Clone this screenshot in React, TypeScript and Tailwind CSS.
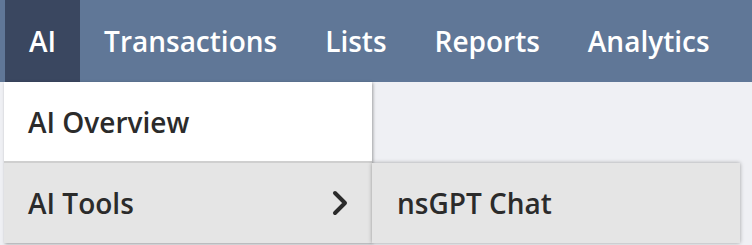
import { ChevronRight } from 'lucide-react';

const navItems = ['AI', 'Transactions', 'Lists', 'Reports', 'Analytics'];

export default function App() {
  return (
    <div
      className="relative h-[245px] w-[752px] overflow-hidden bg-[#eff0f4] font-semibold text-[28px]"
      style={{ fontFamily: '"Open Sans", "Noto Sans", sans-serif' }}
    >
      {/* Top nav */}
      <nav className="flex h-[82px] bg-[#607797] pl-[5px] text-white">
        {navItems.map((item, i) => (
          <div
            key={item}
            className={`flex items-center px-6 ${i === 0 ? 'bg-[#3a4760]' : ''}`}
          >
            {item}
          </div>
        ))}
      </nav>

      {/* Dropdown menu */}
      <div className="absolute left-[4px] top-[82px] w-[368px] text-[#2b2b2b] shadow-[1px_1px_3px_rgba(0,0,0,0.35)]">
        <div className="flex h-[79px] items-center bg-white px-6">AI Overview</div>
        <div className="h-[2px] bg-[#cfcfcf]" />
        <div className="relative flex h-[80px] items-center justify-between bg-[#e5e5e5] pl-6 pr-[12px]">
          <span>AI Tools</span>
          <ChevronRight size={40} strokeWidth={2.4} className="text-[#2b2b2b]" />

          {/* Submenu */}
          <div className="absolute left-full top-0 flex h-[80px] w-[368px] items-center bg-[#e5e5e5] px-[25px] shadow-[0_0_4px_rgba(0,0,0,0.35)]">
            nsGPT Chat
          </div>
        </div>
      </div>
    </div>
  );
}
